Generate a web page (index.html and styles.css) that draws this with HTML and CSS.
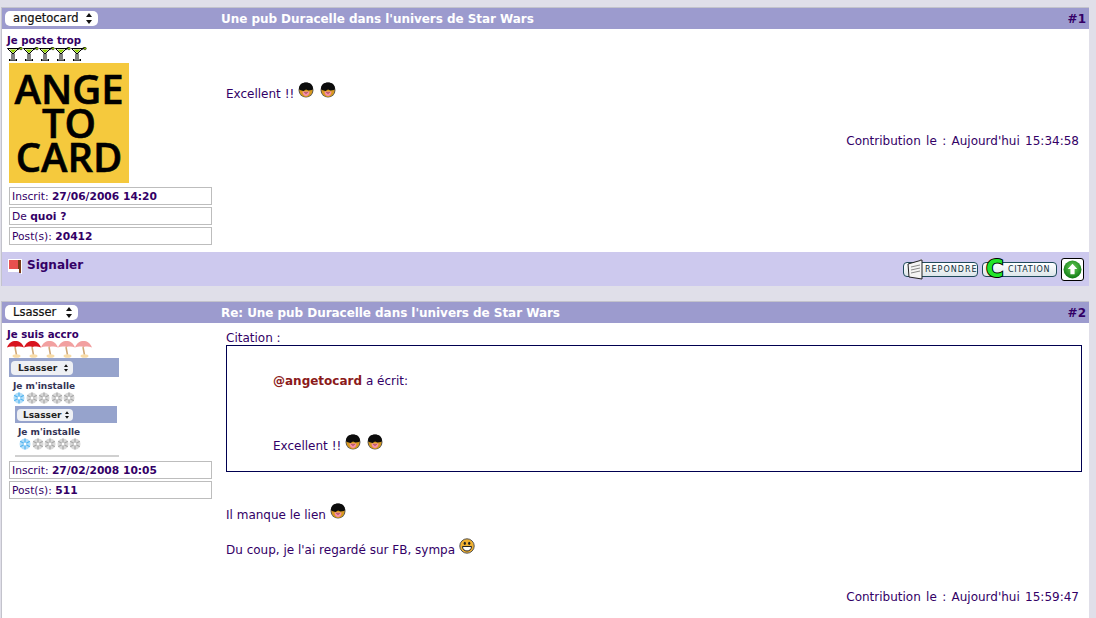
FILE: index.html
```html
<!DOCTYPE html>
<html>
<head>
	<title>Une pub Duracelle dans l'univers de Star Wars</title>
	<link rel="stylesheet" href="styles.css">
</head>
<body>
	<svg class="defs" width="0" height="0">
		<symbol id="cool" viewBox="0 0 16 16">
			<circle cx="8" cy="8" r="7.500" fill="#555"/>
			<circle cx="8" cy="8.500" r="6.500" fill="#D99A1E"/>
			<path d="M1 7C1 2.500 4 .5 8 .5s7 2 7 6.500l-1 1-3.500.5L8 7.500 5.500 9 2 8z" fill="#0c0c0c"/>
			<path d="M4.500 9.500h7c0 2.500-1.500 4.500-3.500 4.500s-3.500-2-3.500-4.500z" fill="#F590A8"/>
			<path d="M6.500 10L8 11.500 9.500 10" fill="none" stroke="#8a3040"/>
		</symbol>
		<symbol id="smile" viewBox="0 0 16 16">
			<circle cx="8" cy="8" r="7.200" fill="#F0B030" stroke="#555"/>
			<ellipse cx="5.800" cy="5.300" rx="1.100" ry="1.600" fill="#222"/>
			<ellipse cx="10.200" cy="5.300" rx="1.100" ry="1.600" fill="#222"/>
			<path d="M3.500 8.500h9c0 2.800-2 4.500-4.500 4.500s-4.500-1.700-4.500-4.500z" fill="#fff" stroke="#222"/>
		</symbol>
		<symbol id="glass" viewBox="0 0 16 14">
			<path d="M.5 1.500h11L6 7z" fill="#fff" stroke="#000"/>
			<path d="M2.500 2.500h7L6 6z" fill="#8fce00"/>
			<path d="M4.500 6.500h3V12h-3z" fill="#000"/>
			<path d="M5.500 7h1v5h-1z" fill="#fff"/>
			<path d="M2 12h8v2H2z" fill="#000"/>
			<path d="M3 12.500h6v.8H3z" fill="#fff"/>
			<path d="M10 2.500L14 .5" stroke="#000" stroke-width="1.500"/>
			<circle cx="14" cy="1.500" r="1.300" fill="#8fce00" stroke="#000" stroke-width=".5"/>
		</symbol>
		<symbol id="parasol" viewBox="0 0 17 17">
			<path d="M0 6.500C2 1.500 5 0 8.500 0S15 1.500 17 6.500C14 5.300 11 5.500 8.500 6 6 5.500 3 5.300 0 6.500z" fill="currentColor"/>
			<path d="M8 6l1.500 8" stroke="#D0A878" stroke-width="1.500"/>
			<ellipse cx="9.500" cy="15" rx="4" ry="1.800" fill="#F8DCA8"/>
		</symbol>
		<symbol id="flake" viewBox="0 0 12 12">
			<circle cx="6" cy="6" r="5.500" fill="currentColor" opacity=".45"/>
			<path d="M6 .5v11M1.200 3.200l9.600 5.600M1.200 8.800l9.600-5.600" stroke="currentColor" stroke-width="1.200"/>
			<circle cx="6" cy="6" r="1.500" fill="#fff"/>
		</symbol>
		<symbol id="updown" viewBox="0 0 6 11">
			<path d="M3 0l3 4H0zM3 11L0 7h6z" fill="#111"/>
		</symbol>
	</svg>

	<div class="post">
		<div class="post-head">
			<div class="head-left">
				<div class="pseudo">angetocard <svg class="updown"><use href="#updown"/></svg></div>
			</div>
			<div class="post-title">Une pub Duracelle dans l'univers de Star Wars</div>
			<div class="post-num">#1</div>
		</div>
		<div class="post-body">
			<div class="side">
				<div class="rank">Je poste trop</div>
				<div class="rank-icons">
					<svg class="glass"><use href="#glass"/></svg><svg class="glass"><use href="#glass"/></svg><svg class="glass"><use href="#glass"/></svg><svg class="glass"><use href="#glass"/></svg><svg class="glass"><use href="#glass"/></svg>
				</div>
				<div class="avatar">ANGE<br>TO<br>CARD</div>
				<div class="info">Inscrit: <b>27/06/2006 14:20</b></div>
				<div class="info">De <b>quoi ?</b></div>
				<div class="info">Post(s): <b>20412</b></div>
			</div>
			<div class="content content-first">
				<p class="msg">Excellent !! <svg class="smiley"><use href="#cool"/></svg> <svg class="smiley"><use href="#cool"/></svg></p>
				<div class="date">Contribution le : Aujourd'hui 15:34:58</div>
			</div>
		</div>
		<div class="post-foot">
			<div class="report">
				<svg class="flag" viewBox="0 0 14 15"><path d="M0 0h14v15h-1V13H0z" fill="#fff"/><path d="M1 1h9v9H1z" fill="#e8504e"/><path d="M10 1h3v13h-2V10h-1z" fill="#7a3a18"/></svg>
				Signaler
			</div>
			<div class="actions">
				<div class="btn btn-reply">
					<svg class="btn-icon" viewBox="0 0 16 21"><path d="M1 5L15 1v19L2 18z" fill="#f4f4f4" stroke="#222"/><path d="M13 1l2-.5M4 8l9-2M4 11l9-2M4 14l9-2" stroke="#888"/></svg>
					REPONDRE
				</div>
				<div class="btn btn-quote">
					<span class="big-c">C</span>
					CITATION
				</div>
				<div class="btn-top">
					<svg viewBox="0 0 18 18">
						<defs>
							<radialGradient id="topgreen" cx=".5" cy=".4" r=".6">
								<stop offset="0" stop-color="#6CD35A"/>
								<stop offset="1" stop-color="#0F7A14"/>
							</radialGradient>
						</defs>
						<circle cx="9" cy="9" r="8.500" fill="url(#topgreen)"/>
						<path d="M9 3.500l4.500 5H11v5H7v-5H4.500z" fill="#fff"/>
					</svg>
				</div>
			</div>
		</div>
	</div>

	<div class="post post-last">
		<div class="post-head">
			<div class="head-left">
				<div class="pseudo pseudo-short">Lsasser <svg class="updown"><use href="#updown"/></svg></div>
			</div>
			<div class="post-title">Re: Une pub Duracelle dans l'univers de Star Wars</div>
			<div class="post-num">#2</div>
		</div>
		<div class="post-body">
			<div class="side">
				<div class="rank">Je suis accro</div>
				<div class="rank-icons rank-icons-tall">
					<svg class="parasol red"><use href="#parasol"/></svg><svg class="parasol red"><use href="#parasol"/></svg><svg class="parasol pale"><use href="#parasol"/></svg><svg class="parasol pale"><use href="#parasol"/></svg><svg class="parasol pale"><use href="#parasol"/></svg>
				</div>
				<div class="signature">
					<div class="sig-bar"><span class="sig-pseudo">Lsasser <svg class="updown-small"><use href="#updown"/></svg></span></div>
					<div class="sig-rank">Je m'installe</div>
					<div class="sig-flakes">
						<svg class="flake on"><use href="#flake"/></svg><svg class="flake"><use href="#flake"/></svg><svg class="flake"><use href="#flake"/></svg><svg class="flake"><use href="#flake"/></svg><svg class="flake"><use href="#flake"/></svg>
					</div>
					<div class="sig-inner">
						<div class="sig-bar sig-bar-inner"><span class="sig-pseudo">Lsasser <svg class="updown-small"><use href="#updown"/></svg></span></div>
						<div class="sig-rank">Je m'installe</div>
						<div class="sig-flakes">
							<svg class="flake on"><use href="#flake"/></svg><svg class="flake"><use href="#flake"/></svg><svg class="flake"><use href="#flake"/></svg><svg class="flake"><use href="#flake"/></svg><svg class="flake"><use href="#flake"/></svg>
						</div>
						<div class="sig-rule"></div>
					</div>
				</div>
				<div class="info">Inscrit: <b>27/02/2008 10:05</b></div>
				<div class="info">Post(s): <b>511</b></div>
			</div>
			<div class="content">
				<div class="quote-label">Citation :</div>
				<div class="quote">
					<div class="quote-author"><b>@angetocard</b> a écrit:</div>
					<div class="quote-text">Excellent !! <svg class="smiley"><use href="#cool"/></svg> <svg class="smiley"><use href="#cool"/></svg></div>
				</div>
				<p class="reply-line">Il manque le lien <svg class="smiley"><use href="#cool"/></svg></p>
				<p class="reply-line reply-second">Du coup, je l'ai regardé sur FB, sympa <svg class="smiley"><use href="#smile"/></svg></p>
				<div class="date date-second">Contribution le : Aujourd'hui 15:59:47</div>
			</div>
		</div>
	</div>
</body>
</html>
```
FILE: styles.css
```css
html, body {
	height: 100%;
	overflow: hidden;
}

body {
	margin: 0;
	padding: 7px 7px 0 1px;
	box-sizing: border-box;
	background-color: #E0DFE9;
	color: #330066;
	font-family: "DejaVu Sans", Verdana, sans-serif;
	font-size: 12px;
	display: flex;
	flex-direction: column;
}

.defs {
	position: absolute;
}

.post {
	border: 1px solid #C3C3CC;
	border-width: 1px 0 0 1px;
	background: white;
	margin-bottom: 15px;
	flex: none;
}

.post-last {
	flex: 1;
	min-height: 0;
	margin-bottom: 0;
}

.post-head {
	height: 21px;
	background: #9C9BCE;
	display: flex;
	align-items: center;
	font-weight: bold;
}

.head-left {
	width: 219px;
	flex: none;
}

.pseudo {
	width: 93px;
	height: 15px;
	margin-left: 3px;
	box-sizing: border-box;
	padding: 0 6px 0 8px;
	background: white;
	border-radius: 5px;
	color: #111;
	font-size: 11.500px;
	font-weight: normal;
	line-height: 15px;
	display: flex;
	justify-content: space-between;
	align-items: center;
	-webkit-text-stroke: 0.2px #111;
}

.pseudo-short {
	width: 73px;
}

.updown {
	width: 6px;
	height: 11px;
}

.post-title {
	color: white;
	font-size: 12px;
	font-weight: bold;
	letter-spacing: -0.05px;
	flex: 1;
}

.post-num {
	padding-right: 3px;
	font-size: 12px;
}

.post-body {
	display: flex;
}

.side {
	width: 217px;
	flex: none;
	padding: 5px 0 0 5px;
	box-sizing: border-box;
}

.rank {
	font-size: 10.200px;
	font-weight: bold;
	line-height: 13px;
}

.rank-icons {
	display: flex;
	height: 15px;
}

.rank-icons-tall {
	height: 17px;
}

.glass {
	width: 16px;
	height: 14px;
}

.parasol {
	width: 17px;
	height: 17px;
}

.red {
	color: #D8141E;
}

.pale {
	color: #F2A0A0;
}

.avatar {
	width: 120px;
	height: 120px;
	margin: 1px 0 4px 2px;
	background: #F5C93D;
	color: black;
	font-family: "Open Sans", sans-serif;
	font-size: 40px;
	font-weight: 600;
	line-height: 34px;
	text-align: center;
	padding-top: 9px;
	box-sizing: border-box;
	-webkit-text-stroke: 0.6px black;
}

.info {
	width: 203px;
	height: 18px;
	margin: 0 0 2px 2px;
	border: 1px solid #BDBDBD;
	box-sizing: border-box;
	padding-left: 2px;
	font-size: 10.700px;
	line-height: 18px;
	overflow: hidden;
}

.content {
	flex: 1;
	padding-left: 7px;
	padding-right: 7px;
}

.content-first {
	height: 223px;
}

.msg {
	margin: 53px 0 0;
	line-height: 20px;
}

.smiley {
	width: 16px;
	height: 16px;
	vertical-align: 0;
}

.smiley + .smiley {
	margin-left: 2px;
}

.date {
	text-align: right;
	margin-top: 30px;
	padding-right: 3px;
	word-spacing: 1.500px;
}

.post-foot {
	height: 34px;
	background: #CDC9EE;
	display: flex;
	justify-content: space-between;
}

.report {
	display: flex;
	align-items: flex-start;
	gap: 5px;
	padding: 6px 0 0 6px;
	font-weight: bold;
	font-size: 12px;
}

.flag {
	width: 14px;
	height: 15px;
	margin-top: 1px;
}

.actions {
	display: flex;
	align-items: flex-start;
	gap: 4px;
	padding: 6px 5px 0 0;
}

.btn {
	height: 13px;
	margin-top: 4px;
	border: 1px solid #1F4A5A;
	border-radius: 4px;
	background: linear-gradient(white, #DDE6EA);
	display: flex;
	align-items: center;
	color: #10303C;
	font-size: 8px;
	white-space: nowrap;
}

.btn-reply {
	width: 73px;
	letter-spacing: 1px;
}

.btn-quote {
	width: 73px;
	letter-spacing: 0.700px;
}

.btn-icon {
	width: 16px;
	height: 21px;
	margin: 0 2px 0 3px;
	flex: none;
}

.big-c {
	width: 25px;
	padding-left: 3px;
	box-sizing: border-box;
	color: #22E52A;
	font-size: 24px;
	font-weight: bold;
	line-height: 13px;
	-webkit-text-stroke: 2px black;
	paint-order: stroke fill;
}

.btn-top {
	width: 23px;
	height: 23px;
	border: 1px solid black;
	border-radius: 3px;
	background: white;
	box-sizing: border-box;
	padding: 1px;
}

.btn-top svg {
	display: block;
	width: 19px;
	height: 19px;
}

/* thumbnail signature inside the second post */
.signature {
	width: 110px;
	height: 99px;
	margin-left: 2px;
	margin-bottom: 4px;
	overflow: hidden;
}

.sig-bar {
	height: 19px;
	background: #96A3CC;
	display: flex;
	align-items: center;
	padding-left: 2px;
}

.sig-bar-inner {
	height: 17px;
	margin-right: 2px;
}

.sig-pseudo {
	width: 62px;
	height: 14px;
	box-sizing: border-box;
	padding: 0 5px 0 7px;
	background: #EEF0F4;
	border-radius: 4px;
	color: #222;
	font-size: 9.200px;
	font-weight: bold;
	line-height: 14px;
	display: flex;
	justify-content: space-between;
	align-items: center;
}

.sig-bar-inner .sig-pseudo {
	width: 56px;
	height: 12px;
	padding: 0 4px 0 6px;
	font-size: 9px;
	line-height: 12px;
}

.updown-small {
	width: 4px;
	height: 8px;
	flex: none;
}

.sig-rank {
	margin: 4px 0 0 4px;
	font-size: 9px;
	font-weight: bold;
	line-height: 11px;
	color: #333355;
}

.sig-flakes {
	display: flex;
	margin-left: 4px;
	height: 12px;
	gap: 0.600px;
}

.flake {
	width: 12px;
	height: 12px;
	color: #A8A8A8;
}

.flake.on {
	color: #52B4F0;
}

.sig-inner {
	margin: 2px 0 0 6px;
}

.sig-inner .sig-flakes {
	margin-left: 4px;
}

.sig-inner .sig-rank {
	margin-left: 3px;
}

.sig-rule {
	height: 2px;
	margin-top: 5px;
	background: #D0D0D0;
}

.quote-label {
	margin-top: 8px;
	line-height: 14px;
}

.quote {
	height: 127px;
	border: 1px solid #000050;
	box-sizing: border-box;
	padding: 28px 0 0 46px;
}

.quote-author b {
	color: #8B1A1A;
}

.quote-text {
	margin-top: 46px;
}

.reply-line {
	margin: 31px 0 0;
	line-height: 20px;
}

.reply-second {
	margin-top: 13px;
}

.date-second {
	margin-top: 30px;
}
```
